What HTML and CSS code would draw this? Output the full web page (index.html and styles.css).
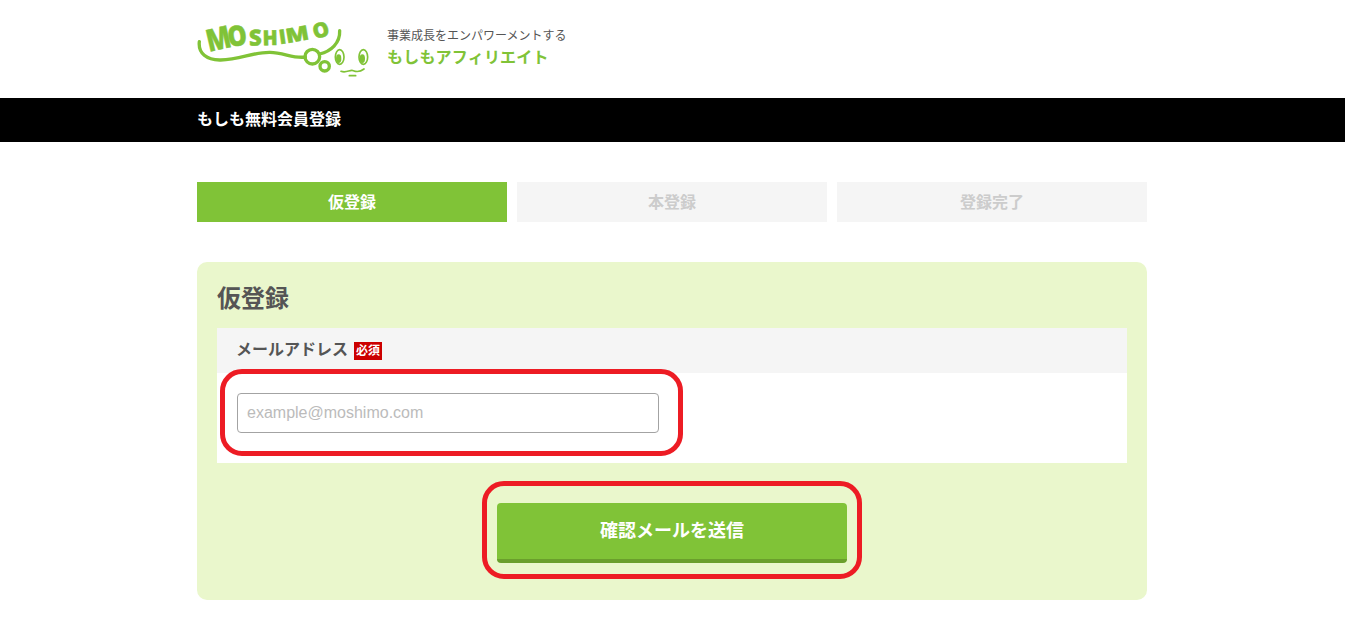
FILE: index.html
```html
<!DOCTYPE html>
<html lang="ja">
<head>
<meta charset="utf-8">
<title>もしも無料会員登録</title>
<link rel="stylesheet" href="styles.css">
</head>
<body>
<header class="site-header">
  <div class="wrap brand">
    <svg class="logo" viewBox="21 30 516 180" aria-label="MOSHIMO">
      <g class="logo-text">
        <text transform="translate(57 126) rotate(-13) scale(.82 1)" font-size="92">M</text>
        <text transform="translate(117 111) rotate(-8) scale(.86 1)" font-size="84">O</text>
        <text transform="translate(178 107) rotate(-2)" font-size="66">S</text>
        <text transform="translate(218 106) rotate(-1) scale(.95 1)" font-size="62">H</text>
        <text transform="translate(270 103) rotate(-8)" font-size="60">I</text>
        <text transform="translate(291 100) rotate(-10) scale(1.2 1)" font-size="60">M</text>
        <text transform="translate(374 88) rotate(-15)" font-size="62">O</text>
      </g>
      <g class="logo-line">
        <path d="M28 95C24 130 50 151 92 150C150 149 190 126 240 127C282 128 310 146 346 141"/>
        <path d="M389 132C422 124 451 100 449 62"/>
        <circle cx="367" cy="140" r="22"/>
        <circle cx="404" cy="169" r="14"/>
      </g>
      <g class="logo-face">
        <ellipse cx="449" cy="141" rx="13" ry="22"/>
        <ellipse cx="520" cy="141" rx="13" ry="22"/>
        <path d="M453 184C470 190 480 178 490 182C500 186 510 186 522 177"/>
        <path d="M478 197L497 197"/>
      </g>
      <ellipse class="logo-pupil" cx="446" cy="146" rx="8" ry="13"/>
      <ellipse class="logo-pupil" cx="517" cy="146" rx="8" ry="13"/>
    </svg>
    <div class="brand-text">
      <p class="tagline">事業成長をエンパワーメントする</p>
      <p class="brand-name">もしもアフィリエイト</p>
    </div>
  </div>
</header>
<div class="title-bar">
  <div class="wrap">もしも無料会員登録</div>
</div>
<main class="wrap content">
  <ol class="steps">
    <li class="step step-active">仮登録</li>
    <li class="step">本登録</li>
    <li class="step">登録完了</li>
  </ol>
  <section class="card">
    <h1 class="card-title">仮登録</h1>
    <div class="field">
      <div class="field-label">メールアドレス<span class="required">必須</span></div>
      <div class="field-body">
        <input class="text-input" type="text" placeholder="example@moshimo.com">
        <span class="mark mark-input"></span>
      </div>
    </div>
    <div class="actions">
      <button class="submit" type="button">確認メールを送信</button>
      <span class="mark mark-button"></span>
    </div>
  </section>
</main>
</body>
</html>
```
FILE: styles.css
```css
* { box-sizing: border-box; }
html, body { margin: 0; padding: 0; }
body {
  background: #fff;
  color: #555;
  font-family: "Noto Sans CJK JP", "Liberation Sans", sans-serif;
  overflow: hidden;
}
.wrap { width: 950px; margin-left: 197px; }

.site-header { height: 98px; }
.brand { display: flex; align-items: flex-start; gap: 18px; padding-top: 20px; }
.logo { width: 172px; height: 60px; display: block; flex: none; overflow: visible; }
.logo-text text {
  font-family: "Open Sans", "Liberation Sans", sans-serif;
  font-weight: 800;
  fill: #80c337;
  stroke: #80c337;
  stroke-width: 1.5;
}
.logo-line { fill: none; stroke: #80c337; stroke-width: 10; stroke-linecap: round; }
.logo-face { fill: none; stroke: #80c337; stroke-width: 5; stroke-linecap: round; }
.logo-pupil { fill: #80c337; }
.brand-text { padding-top: 6px; }
.tagline { margin: 0; font-size: 12px; line-height: 18px; color: #555; }
.brand-name { margin: 0; font-size: 16px; line-height: 24px; font-weight: 700; letter-spacing: .2px; color: #80c337; }

.title-bar {
  height: 44px;
  background: #000;
  color: #fff;
  font-size: 16px;
  font-weight: 700;
  line-height: 40px;
}

.content { padding-top: 40px; }
.steps { display: flex; gap: 10px; margin: 0 0 40px; padding: 0; list-style: none; }
.step {
  flex: 1;
  height: 40px;
  background: #f5f5f5;
  color: #ccc;
  font-size: 16px;
  font-weight: 700;
  line-height: 38px;
  text-align: center;
}
.step-active { background: #80c337; color: #fff; }

.card { height: 338px; padding: 20px; background: #eaf7cc; border-radius: 10px; }
.card-title { margin: 0 0 10px; font-size: 24px; line-height: 30px; padding-bottom: 6px; font-weight: 700; color: #555; }

.field { background: #fff; }
.field-label {
  display: flex;
  align-items: center;
  height: 45px;
  padding: 0 0 6px 19px;
  background: #f5f5f5;
  font-size: 16px;
  font-weight: 700;
  color: #555;
}
.required {
  width: 28px;
  height: 18px;
  margin: 6px 0 0 6px;
  background: #c00;
  color: #fff;
  font-family: "Liberation Serif", "Noto Sans CJK JP", serif;
  font-size: 12px;
  font-weight: 700;
  line-height: 18px;
  text-align: center;
}
.field-body { position: relative; height: 90px; padding: 20px; }
.text-input {
  display: block;
  width: 422px;
  height: 40px;
  padding: 0 9px;
  border: 1px solid #a3a3a3;
  border-radius: 4px;
  background: #fff;
  font-family: "Liberation Sans", sans-serif;
  font-size: 16px;
  outline: 0;
}
.text-input::placeholder { color: #bbb; opacity: 1; }

.actions { position: relative; display: flex; justify-content: center; padding-top: 40px; }
.submit {
  width: 350px;
  height: 60px;
  padding: 0 0 4px;
  border: 0;
  border-bottom: 4px solid #6a9f2c;
  border-radius: 4px;
  background: #80c337;
  color: #fff;
  font-family: "Noto Sans CJK JP", sans-serif;
  font-size: 18px;
  font-weight: 700;
}

.mark {
  position: absolute;
  border: 5px solid #ed1c24;
  border-radius: 22px;
  pointer-events: none;
}
.mark-input { left: 3px; top: -4px; width: 463px; height: 87px; }
.mark-button { left: 265px; top: 18px; width: 380px; height: 98px; }
```
